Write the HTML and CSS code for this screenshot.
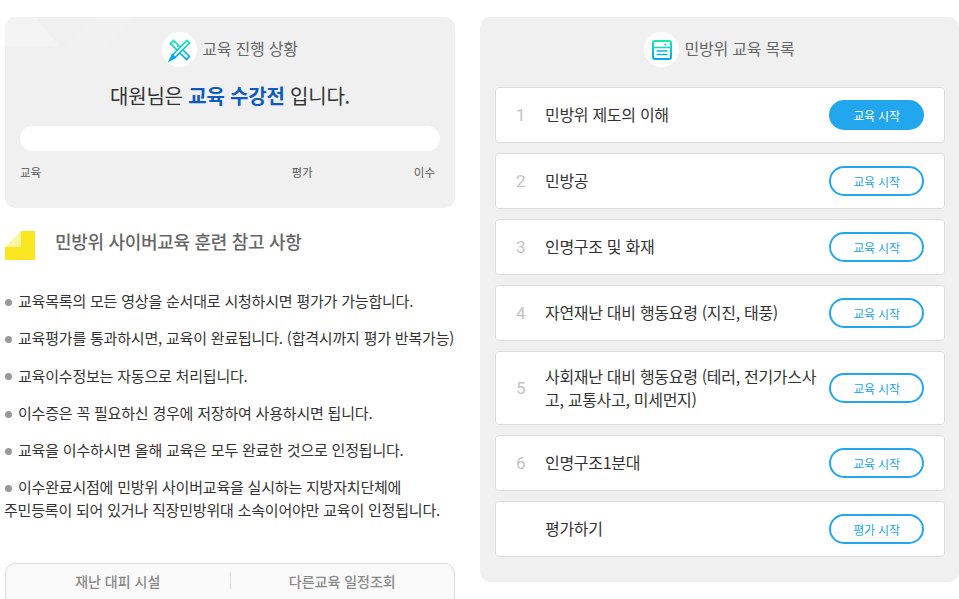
FILE: index.html
```html
<!DOCTYPE html>
<html lang="ko">
<head>
<meta charset="utf-8">
<title>민방위 사이버교육</title>
<link rel="stylesheet" href="styles.css">
</head>
<body>
<div class="page">
  <div class="left">
    <section class="status">
      <svg class="status-deco" width="180" height="60" viewBox="0 0 180 60" aria-hidden="true">
        <path d="M0 0H30L54 29H0Z" fill="#f3f3f3"/>
        <path d="M60 29L88 0H130L100 29Z" fill="#f1f1f1"/>
      </svg>
      <div class="panel-head">
        <span class="head-icon">
          <svg width="24" height="24" viewBox="0 0 24 24" fill="none" stroke-width="1.700" aria-hidden="true">
            <defs><linearGradient id="g1" x1="0" y1="0" x2="0" y2="1"><stop offset="0" stop-color="#13ebaa"/><stop offset="1" stop-color="#05a6ff"/></linearGradient></defs>
            <path d="M5.500 2.500L2.500 5.500L18.500 21.500L21.500 18.500Z" stroke="url(#g1)"/>
            <path d="M7 4L5.500 5.500M10.500 7.500L9 9M15 12L13.500 13.500M18 15L16.500 16.500" stroke="#13c8d0" stroke-width="1"/>
            <path d="M19 2.500L21.500 5L7 19.500L2 22L4.500 17Z" stroke="url(#g1)" fill="#fff"/>
            <path d="M2 22L4.500 17L7 19.500Z" fill="#05a6ff" stroke="#05a6ff"/>
          </svg>
        </span>
        <h2>교육 진행 상황</h2>
      </div>
      <p class="state">대원님은 <strong>교육 수강전</strong> 입니다.</p>
      <div class="track"></div>
      <div class="steps"><span>교육</span><span class="step-mid">평가</span><span>이수</span></div>
    </section>

    <div class="notice-head">
      <svg class="note" width="30" height="29" viewBox="0 0 30 29" aria-hidden="true">
        <path d="M16 0H30V29H0V16H16Z" fill="#fae620"/>
        <path d="M16 0V16H0Z" fill="#fdf4a0"/>
      </svg>
      <h3>민방위 사이버교육 훈련 참고 사항</h3>
    </div>

    <ul class="notes">
      <li>교육목록의 모든 영상을 순서대로 시청하시면 평가가 가능합니다.</li>
      <li>교육평가를 통과하시면, 교육이 완료됩니다. (합격시까지 평가 반복가능)</li>
      <li>교육이수정보는 자동으로 처리됩니다.</li>
      <li>이수증은 꼭 필요하신 경우에 저장하여 사용하시면 됩니다.</li>
      <li>교육을 이수하시면 올해 교육은 모두 완료한 것으로 인정됩니다.</li>
      <li>이수완료시점에 민방위 사이버교육을 실시하는 지방자치단체에<br>주민등록이 되어 있거나 직장민방위대 소속이어야만 교육이 인정됩니다.</li>
    </ul>

    <nav class="links">
      <a>재난 대피 시설</a>
      <a>다른교육 일정조회</a>
    </nav>
  </div>

  <section class="list-panel">
    <div class="panel-head">
      <span class="head-icon">
        <svg width="20" height="20" viewBox="0 0 20 20" fill="none" aria-hidden="true">
          <defs><linearGradient id="g2" x1="0" y1="0" x2="0" y2="1"><stop offset="0" stop-color="#13ebaa"/><stop offset="1" stop-color="#05a6ff"/></linearGradient></defs>
          <rect x="1" y="1" width="18" height="18" rx="2" stroke="url(#g2)" stroke-width="2"/>
          <path d="M1 7.500H19" stroke="#14dcbc" stroke-width="1.500"/>
          <path d="M4.500 11H15.500M4.500 14.500H15.500" stroke="#10b4ea" stroke-width="1.500"/>
          <path d="M11.500 3.800h3.500l-1.750 2.200Z" fill="#14dcbc"/>
        </svg>
      </span>
      <h2>민방위 교육 목록</h2>
    </div>
    <ol class="courses">
      <li class="course"><span class="num">1</span><span class="name">민방위 제도의 이해</span><a class="btn btn-on">교육 시작</a></li>
      <li class="course"><span class="num">2</span><span class="name">민방공</span><a class="btn">교육 시작</a></li>
      <li class="course"><span class="num">3</span><span class="name">인명구조 및 화재</span><a class="btn">교육 시작</a></li>
      <li class="course"><span class="num">4</span><span class="name">자연재난 대비 행동요령 (지진, 태풍)</span><a class="btn">교육 시작</a></li>
      <li class="course course-tall"><span class="num">5</span><span class="name">사회재난 대비 행동요령 (테러, 전기가스사고, 교통사고, 미세먼지)</span><a class="btn">교육 시작</a></li>
      <li class="course"><span class="num">6</span><span class="name">인명구조1분대</span><a class="btn">교육 시작</a></li>
      <li class="course"><span class="num"></span><span class="name">평가하기</span><a class="btn">평가 시작</a></li>
    </ol>
  </section>
</div>
</body>
</html>
```
FILE: styles.css
```css
* { box-sizing: border-box; }
html, body { margin: 0; height: 599px; overflow: hidden; background: #fff; }
body { font-family: "Noto Sans CJK KR", Roboto, sans-serif; color: #333; }
h2, h3, p, ul, ol { margin: 0; padding: 0; list-style: none; }

.page { display: flex; align-items: flex-start; gap: 25px; padding: 17px 0 0 5px; width: 959px; }
.left { width: 450px; flex: none; }

.status { position: relative; height: 191px; background: #f0f0f0; border-radius: 10px; padding: 15px 15px 0; overflow: hidden; }
.status-deco { position: absolute; left: 0; top: 0; }

.panel-head { position: relative; display: flex; justify-content: center; align-items: center; gap: 5px; height: 35px; }
.panel-head h2 { font-size: 16px; font-weight: 400; color: #666; letter-spacing: -0.2px; margin-top: -3px; }
.head-icon { width: 35px; height: 35px; border-radius: 50%; background: #fff; display: flex; align-items: center; justify-content: center; flex: none; }

.state { position: relative; margin-top: 15px; text-align: center; font-size: 20px; line-height: 28px; color: #333; letter-spacing: -0.2px; }
.state strong { color: #0f5bbd; font-weight: 700; }

.track { position: relative; margin-top: 16px; height: 25px; width: 420px; background: #fff; border-radius: 13px; }
.steps { position: relative; display: flex; justify-content: space-between; margin-top: 13px; padding-right: 5px; font-size: 11.500px; line-height: 16px; color: #555; }
.step-mid { margin-left: 149px; }

.notice-head { display: flex; align-items: center; margin-top: 18px; height: 32px; }
.note { flex: none; margin-top: 7px; }
.notice-head h3 { margin-left: 20px; font-size: 18px; font-weight: 500; color: #666; letter-spacing: -0.3px; margin-top: -3px; }

.notes { margin-top: 31px; font-size: 15px; color: #333; margin-left: -1px; letter-spacing: -0.2px; }
.notes li { line-height: 23px; margin-bottom: 14.250px; white-space: nowrap; }
.notes li::before { content: ""; display: inline-block; width: 7px; height: 7px; border-radius: 50%; background: #999; margin: 0 6px 1px 1px; vertical-align: middle; }

.links { margin-top: 42px; height: 48px; display: flex; border: 1px solid #ddd; border-radius: 10px; background: #fafafa; padding-top: 8px; }
.links a { flex: 1; height: 17px; display: flex; align-items: center; justify-content: center; font-size: 14px; font-weight: 500; color: #888; }
.links a + a { border-left: 1px solid #ddd; }

.list-panel { width: 479px; height: 565px; background: #f0f0f0; border-radius: 10px; padding: 15px 14px 0 15px; }
.list-panel .panel-head { padding-right: 1px; }
.courses { margin-top: 20px; display: flex; flex-direction: column; gap: 10px; }
.course { display: flex; align-items: center; min-height: 56px; background: #fff; border: 1px solid #ddd; border-radius: 4px; padding: 0 20px 0 20px; }
.course-tall { min-height: 74px; }
.num { width: 29px; flex: none; font-size: 17px; font-weight: 400; color: #c4c4c4; font-family: Roboto, sans-serif; }
.name { flex: 1; min-width: 0; font-size: 16px; line-height: 23px; color: #333; letter-spacing: -0.3px; padding-right: 8px; word-break: break-all; margin-top: -1px; }
.btn { flex: none; width: 95px; height: 30px; display: flex; align-items: center; justify-content: center; border: 2px solid #22a7ee; border-radius: 15px; background: #fff; color: #22a7ee; font-size: 12px; letter-spacing: -0.2px; }
.btn-on { background: #22a7ee; color: #fff; }
```
